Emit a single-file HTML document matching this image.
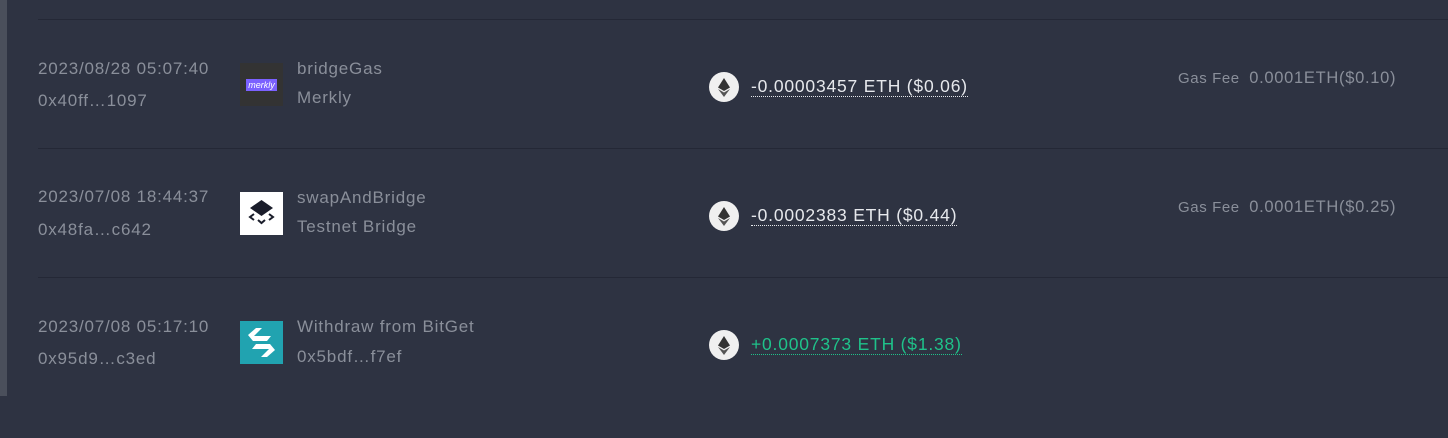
<!DOCTYPE html>
<html><head><style>
body{margin:0;width:1448px;height:438px;background:#2e3342;font-family:"Liberation Sans",sans-serif;position:relative;overflow:hidden}
.strip{position:absolute;left:0;top:0;width:7px;height:396px;background:#4a4f5b}
.line{position:absolute;left:38px;right:0;height:1px;background:#242836}
.t{position:absolute;color:#8a8f9a;font-size:17px;letter-spacing:0.8px;white-space:nowrap}
.s{font-size:15px;letter-spacing:0.6px}
.s span{font-size:16.5px;letter-spacing:0.7px}
.amt{position:absolute;left:751px;font-size:17.5px;letter-spacing:0.8px;color:#e6e8ec;border-bottom:1px dotted #e6e8ec;line-height:20px;white-space:nowrap}
.g{color:#1fc28a;border-color:#1fc28a}
.eth{position:absolute;left:709px;width:30px;height:30px;border-radius:50%;background:#f0f0f0}
.ic{position:absolute;left:240px;width:43px;height:43px}
</style></head><body>
<div class="strip"></div>
<div class="line" style="top:19px"></div>
<div class="line" style="top:148px"></div>
<div class="line" style="top:277px"></div>

<div class="t" style="left:38px;top:59px">2023/08/28 05:07:40</div>
<div class="t" style="left:38px;top:91px">0x40ff…1097</div>
<div class="ic" style="top:63px;background:#333;display:flex;align-items:center;justify-content:center"><div style="background:#7b61ff;color:#fff;font-size:9px;font-style:italic;padding:0 2px;line-height:12px">merkly</div></div>
<div class="t" style="left:297px;top:59px">bridgeGas</div>
<div class="t" style="left:297px;top:88px">Merkly</div>
<div class="eth" style="top:72px"><svg width="30" height="30" viewBox="0 0 30 30"><path d="M15 6 L21 15.5 L15 19 L9 15.5Z" fill="#333"/><path d="M15 20.5 L21 17 L15 25 L9 17Z" fill="#555"/></svg></div>
<div class="amt" style="top:76px">-0.00003457 ETH ($0.06)</div>
<div class="t s" style="left:1178px;top:69px">Gas Fee&nbsp; <span>0.0001ETH($0.10)</span></div>

<div class="t" style="left:38px;top:187px">2023/07/08 18:44:37</div>
<div class="t" style="left:38px;top:220px">0x48fa…c642</div>
<div class="ic" style="top:192px;background:#fff"><svg width="43" height="43" viewBox="0 0 43 43"><path d="M21.5 8 L33 16 L21.5 24 L10 16Z" fill="#1a1d2a"/><path d="M14 22 L10 25 L14 28 M29 22 L33 25 L29 28 M18 28 L21.5 31 L25 28" stroke="#1a1d2a" stroke-width="2" fill="none"/></svg></div>
<div class="t" style="left:297px;top:188px">swapAndBridge</div>
<div class="t" style="left:297px;top:217px">Testnet Bridge</div>
<div class="eth" style="top:201px"><svg width="30" height="30" viewBox="0 0 30 30"><path d="M15 6 L21 15.5 L15 19 L9 15.5Z" fill="#333"/><path d="M15 20.5 L21 17 L15 25 L9 17Z" fill="#555"/></svg></div>
<div class="amt" style="top:205px">-0.0002383 ETH ($0.44)</div>
<div class="t s" style="left:1178px;top:198px">Gas Fee&nbsp; <span>0.0001ETH($0.25)</span></div>

<div class="t" style="left:38px;top:317px">2023/07/08 05:17:10</div>
<div class="t" style="left:38px;top:349px">0x95d9…c3ed</div>
<div class="ic" style="top:321px;background:#21a3b0"><svg width="43" height="43" viewBox="0 0 43 43"><path d="M16 7 L22 7 L14 15 L31 15 L27 20 L13 20 L8 14Z" fill="#fff"/><path d="M27 36 L21 36 L29 28 L12 28 L16 23 L30 23 L35 29Z" fill="#fff"/></svg></div>
<div class="t" style="left:297px;top:317px">Withdraw from BitGet</div>
<div class="t" style="left:297px;top:347px">0x5bdf…f7ef</div>
<div class="eth" style="top:330px"><svg width="30" height="30" viewBox="0 0 30 30"><path d="M15 6 L21 15.5 L15 19 L9 15.5Z" fill="#333"/><path d="M15 20.5 L21 17 L15 25 L9 17Z" fill="#555"/></svg></div>
<div class="amt g" style="top:334px">+0.0007373 ETH ($1.38)</div>
</body></html>
